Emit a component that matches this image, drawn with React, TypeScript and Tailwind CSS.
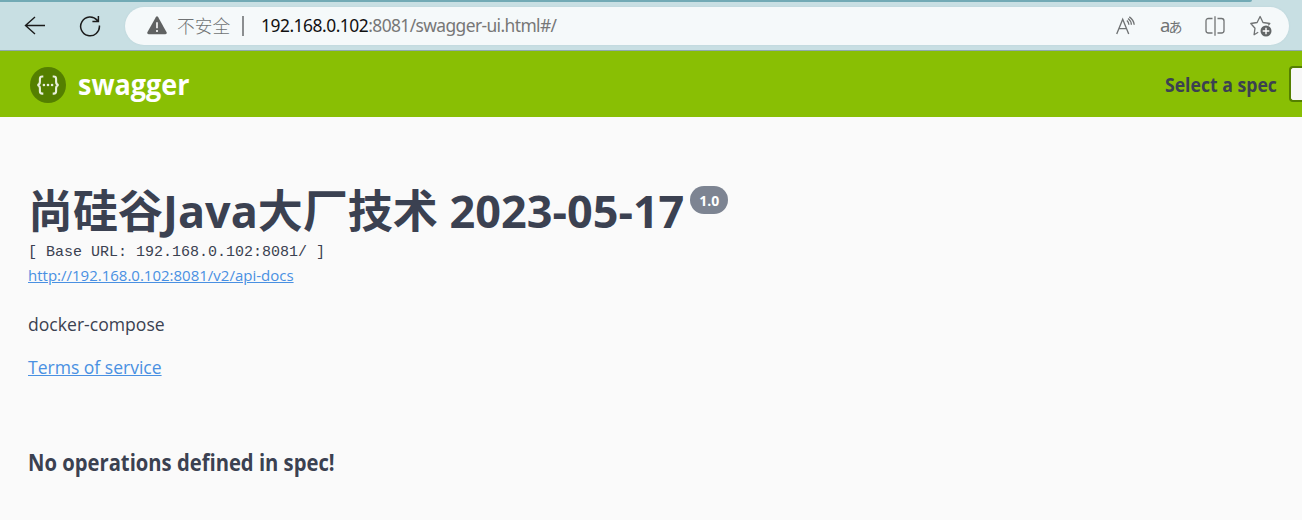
import React from "react";

function BackIcon() {
  return (
    <svg className="w-[22px] h-5 mt-2 ml-6 shrink-0" viewBox="0 0 22 20" fill="none" stroke="#1b1b1b" strokeWidth="1.4">
      <path d="M21 10.500H1.500M11 2L1.500 10.500l9.500 8.500" />
    </svg>
  );
}

function ReloadIcon() {
  return (
    <svg className="w-[22px] h-[22px] mt-2 ml-[33px] shrink-0" viewBox="0 0 22 22" fill="none" stroke="#1b1b1b" strokeWidth="1.5">
      <path d="M20.400 10.500a9.400 9.400 0 1 1-2.200-5.200L19 6.200M19.400 1v5.600h-6" />
    </svg>
  );
}

function WarningIcon() {
  return (
    <svg className="w-5 h-[19px] ml-[22px] mb-px shrink-0" viewBox="0 0 20 19">
      <path d="M8.800 1.200q1.200-1.800 2.400 0l8.400 15q.7 1.900-1.200 2H1.600q-1.900-.1-1.200-2z" fill="#606262" />
      <path d="M10 6.200v6M10 14v1.900" stroke="#fff" strokeWidth="1.600" />
    </svg>
  );
}

function ReadAloudIcon() {
  return (
    <svg className="w-5 h-[19px] mb-[2px] shrink-0" viewBox="0 0 20 19" fill="none" stroke="#707374" strokeWidth="1.350">
      <path d="M.7 18L6.700 3.300 12.700 18M2.900 12.600h7.600" />
      <path d="M10.900 4.500q1.900 1.700 2 4.200M12.100 2.500q3.100 2.400 3.300 6.200M13.300.9q4.400 3 4.900 7.800" />
    </svg>
  );
}

function SplitIcon() {
  return (
    <svg className="w-5 h-5 shrink-0" viewBox="0 0 20 20" fill="none" stroke="#717475" strokeWidth="1.300">
      <path d="M7.500 2.500h-4Q1 2.500 1 5v9.500Q1 17 3.500 17h4M12.500 2.500h4Q19 2.500 19 5v9.500q0 2.500-2.500 2.500h-4M10 .3v19.400" />
    </svg>
  );
}

function FavoriteIcon() {
  return (
    <svg className="w-[22px] h-[22px] shrink-0" viewBox="0 0 22 22" fill="none">
      <path d="M8.200 17.300L4.100 19.700 5 13.200.8 8.500l6.300-1L10.100 1.500l2.900 6 6.800 1-1.600 1.700" stroke="#707374" strokeWidth="1.300" strokeLinejoin="round" />
      <circle cx="16" cy="16" r="5.500" fill="#626667" />
      <path d="M16 12.700v6.600M12.700 16h6.600" stroke="#fff" strokeWidth="1.400" />
    </svg>
  );
}

function SwaggerLogo() {
  return (
    <svg className="w-9 h-9 shrink-0" viewBox="0 0 36 36" fill="none">
      <circle cx="18" cy="18" r="18" fill="#547f00" />
      <path
        d="M13.300 9.500h-1.100q-2.300 0-2.300 2.400v2.800q0 2.800-2.400 3.300 2.400.5 2.400 3.300v2.900q0 2.400 2.300 2.400h1.100M22.700 9.500h1.100q2.300 0 2.300 2.400v2.800q0 2.800 2.400 3.300-2.400.5-2.400 3.300v2.900q0 2.400-2.300 2.400h-1.100"
        stroke="#e9f0dd"
        strokeWidth="2.100"
      />
      <g fill="#e9f0dd">
        <circle cx="13.900" cy="18" r="1.300" />
        <circle cx="18" cy="18" r="1.300" />
        <circle cx="22.100" cy="18" r="1.300" />
      </g>
    </svg>
  );
}

function BrowserBar() {
  return (
    <div className="h-[51px] bg-[#c8dfe3] border-b border-[#8fa9ad] flex flex-col">
      <div className="h-[2px] w-[1252px] bg-[#72aab5] rounded-br-sm shrink-0" />
      <div className="flex items-start pt-[5px] h-12">
        <BackIcon />
        <ReloadIcon />
        <div className="ml-[24px] w-[1164px] h-[38px] rounded-full bg-[#f5f9fa] flex items-center shadow-[0_0_2px_#b9d2d7]">
          <WarningIcon />
          <span className="ml-[10px] w-[54px] text-[17.700px] leading-[26px] pb-[2px] text-[#707374] whitespace-nowrap font-light font-['Noto_Sans_CJK_SC',sans-serif]">不安全</span>
          <div className="w-[2px] h-5 ml-[11px] bg-[#8b8e90]" />
          <span className="ml-[17px] pb-[2px] text-[17.400px] tracking-[-0.600px] text-[#777] whitespace-nowrap font-['Noto_Sans',sans-serif]">
            <span className="text-[#111] tracking-[-0.480px]">192.168.0.102</span>:8081/swagger-ui.html#/
          </span>
          <div className="ml-auto mr-[17px] flex items-center">
            <ReadAloudIcon />
            <span className="ml-[24px] w-[22px] h-6 mb-[3px] flex items-baseline text-[#707374] leading-6">
              <span className="text-[18.500px] font-['Noto_Sans',sans-serif]">a</span>
              <span className="text-[14px] -ml-[2px] font-['Noto_Sans_CJK_JP',sans-serif]">あ</span>
            </span>
            <span className="ml-[23px] flex"><SplitIcon /></span>
            <span className="ml-[25px] flex"><FavoriteIcon /></span>
          </div>
        </div>
      </div>
    </div>
  );
}

export default function App() {
  return (
    <div className="w-[1302px] h-[520px] overflow-hidden bg-[#fafafa] text-[#3b4151] font-['Open_Sans','Noto_Sans_CJK_SC',sans-serif]">
      <BrowserBar />
      <header className="h-[66px] bg-[#89bf04] flex items-center pl-[30px] pt-[2px]">
        <SwaggerLogo />
        <span className="ml-3 mb-[2px] text-[29px] leading-9 font-bold text-white origin-left scale-x-[0.93]">swagger</span>
        <span className="ml-auto mr-3 text-[20px] leading-7 font-bold origin-right scale-x-[0.882]">Select a spec</span>
        <div className="w-[13px] h-9 mb-[2px] border-2 border-r-0 border-[#547f00] rounded-l-[4px] bg-[#f7f7f7] shrink-0" />
      </header>
      <main className="px-7 pt-[69px]">
        <div className="flex items-start h-[58px]">
          <h1 className="text-[45px] leading-[50px] font-bold whitespace-nowrap">尚硅谷Java大厂技术 2023-05-17</h1>
          <span className="ml-[6px] w-[38px] h-7 rounded-full bg-[#7d8492] text-white text-[14px] font-bold flex items-center justify-center">1.0</span>
        </div>
        <pre className="text-[15px] leading-[18px] font-['Liberation_Mono',monospace]">[ Base URL: 192.168.0.102:8081/ ]</pre>
        <a className="block mt-px text-[15px] leading-[25px] text-[#4990e2] underline">http://192.168.0.102:8081/v2/api-docs</a>
        <p className="mt-6 text-[17.600px] leading-6">docker-compose</p>
        <a className="block mt-[19px] text-[17.550px] leading-6 text-[#4990e2] underline">Terms of service</a>
        <h3 className="mt-[69px] text-[23px] leading-7 font-bold origin-left scale-x-[0.879] whitespace-nowrap w-fit">No operations defined in spec!</h3>
      </main>
    </div>
  );
}
